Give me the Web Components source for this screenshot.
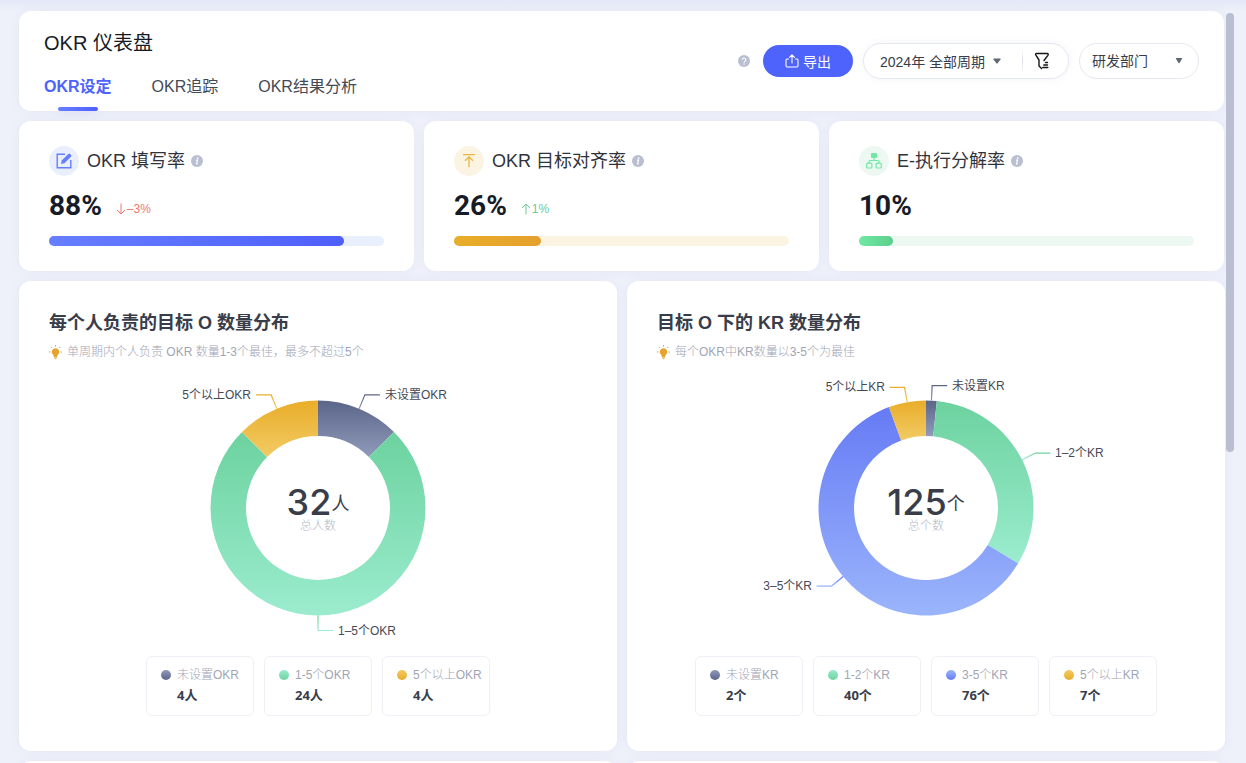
<!DOCTYPE html>
<html lang="zh-CN">
<head>
<meta charset="utf-8">
<title>OKR 仪表盘</title>
<style>
html,body{height:100%;margin:0}
body{font-family:"Liberation Sans","Noto Sans CJK SC",sans-serif;font-size:14px;color:#383d49;background:#eef1fa;overflow:hidden}
</style>
</head>
<body>
<okr-page>
  <okr-header slot="header"></okr-header>
  <kpi-card slot="kpi" label="OKR 填写率" value="88" delta="–3%" trend="down" icon="edit" style="--tint:#e9effd;--from:#667eff;--to:#4e5ffb"></kpi-card>
  <kpi-card slot="kpi" label="OKR 目标对齐率" value="26" delta="1%" trend="up" icon="align" style="--tint:#fbf4e3;--from:#e9ad29;--to:#e4a02d"></kpi-card>
  <kpi-card slot="kpi" label="E-执行分解率" value="10" icon="tree" style="--tint:#edf8f3;--from:#6fe9a4;--to:#5ccf8b"></kpi-card>
  <chart-card slot="chart" unit="人" total-label="总人数"
    data='[["未设置OKR","未设置OKR",4,"slate"],["1–5个OKR","1-5个OKR",24,"green"],["5个以上OKR","5个以上OKR",4,"amber"]]'>
    <span slot="title">每个人负责的目标 O 数量分布</span>
    <span slot="tip">单周期内个人负责 OKR 数量1-3个最佳，最多不超过5个</span>
  </chart-card>
  <chart-card slot="chart" unit="个" total-label="总个数"
    data='[["未设置KR","未设置KR",2,"slate"],["1–2个KR","1-2个KR",40,"green"],["3–5个KR","3-5个KR",76,"blue"],["5个以上KR","5个以上KR",7,"amber"]]'>
    <span slot="title">目标 O 下的 KR 数量分布</span>
    <span slot="tip">每个OKR中KR数量以3-5个为最佳</span>
  </chart-card>
  <blank-card slot="chart"></blank-card>
  <blank-card slot="chart"></blank-card>
</okr-page>

<script>
const CARD = `background:#fff;border-radius:12px;box-shadow:0 0 12px rgba(90,100,170,.06);box-sizing:border-box;`;

class Base extends HTMLElement {
  constructor(){ super(); this.attachShadow({mode:'open'}); }
  connectedCallback(){ this.shadowRoot.innerHTML = this.render(); }
}

customElements.define('okr-page', class extends Base {
  render(){ return `<style>
    :host{display:block;position:relative;height:100vh;overflow:hidden;box-sizing:border-box;padding:11px 22px 0 19px;
      background:linear-gradient(#e3e7f7 0,#eef1fa 11px)}
    main{display:flex;flex-direction:column;gap:10px}
    .row{display:grid;gap:10px}
    .kpis{grid-template-columns:repeat(3,minmax(0,1fr))}
    .charts{grid-template-columns:repeat(2,minmax(0,1fr));margin-right:-1px}
    .thumb{position:absolute;right:12px;top:13px;width:8px;height:calc(58% - 4px);border-radius:4px;background:#b9bed0}
    </style>
    <main><slot name="header"></slot>
      <div class="row kpis"><slot name="kpi"></slot></div>
      <div class="row charts"><slot name="chart"></slot></div></main>
    <div class="thumb"></div>`; }
});

customElements.define('blank-card', class extends Base {
  render(){ return `<style>:host{display:block;min-height:470px;${CARD}}</style>`; }
});

customElements.define('info-dot', class extends Base {
  render(){
    const q = this.hasAttribute('help');
    return `<style>:host{display:block;width:12px;height:12px}svg{display:block}</style>
    <svg width="12" height="12" viewBox="0 0 12 12"><circle cx="6" cy="6" r="6" fill="#b9bed0"/>${q
      ? '<path d="M4.3 4.8a1.75 1.75 0 1 1 2.6 1.5c-.6.35-.8.6-.8 1.1" fill="none" stroke="#fff" stroke-width="1.1"/><circle cx="6.1" cy="9" r=".7" fill="#fff"/>'
      : '<circle cx="6.7" cy="3.1" r=".9" fill="#fff"/><path d="M5 5.1h1.5L5.6 9h1.1" fill="none" stroke="#fff" stroke-width="1.2"/>'}</svg>`; }
});

customElements.define('okr-header', class extends Base {
  render(){ return `<style>
    :host{display:flex;justify-content:space-between;align-items:center;height:100px;padding:0 25px;${CARD}}
    .left{align-self:stretch;display:flex;flex-direction:column;justify-content:space-between;padding-top:18px;box-sizing:border-box}
    h1{margin:0;font-size:20px;line-height:28px;font-weight:400;color:#171b26}
    nav{display:flex;gap:40px}
    a{display:flex;flex-direction:column;align-items:center;gap:8px;font-size:16px;line-height:24px;color:#444955;text-decoration:none}
    a::after{content:"";width:40px;height:4px;border-radius:2px}
    a.on{color:#4e63fb;font-weight:700}
    a.on::after{background:linear-gradient(90deg,#667eff,#4e5ffb);box-shadow:0 2px 8px rgba(78,95,251,.12)}
    .tools{display:flex;align-items:center;gap:10px}
    info-dot{margin-right:3px}
    button,select{font:inherit;border:0;background:none;padding:0;color:#383d49;cursor:pointer}
    .export{display:flex;align-items:center;justify-content:center;gap:4px;width:90px;height:32px;border-radius:16px;background:#4e63fb;color:#fff}
    .pill{display:flex;align-items:center;box-sizing:border-box;height:36px;border:1px solid #e6e8f0;border-radius:18px;background:#fff}
    .period{width:206px;padding-left:16px;box-shadow:0 0 8px rgba(90,100,150,.07)}
    .cycle{display:flex;align-items:center;gap:8px;flex:1;height:34px}
    .cut{width:1px;height:26px;background:linear-gradient(transparent,#dcdee6,transparent)}
    .filter{display:grid;place-items:center;width:38px;height:34px;margin-right:7px}
    .dept{width:120px;display:grid}
    .dept select{grid-area:1/1;appearance:none;width:100%;height:34px;padding-left:12px;border-radius:17px}
    .dept svg{grid-area:1/1;justify-self:end;margin-right:15px;pointer-events:none}
    svg{display:block}
    </style>
    <div class="left"><h1>OKR 仪表盘</h1>
      <nav><a class="on" href="#set">OKR设定</a><a href="#track">OKR追踪</a><a href="#result">OKR结果分析</a></nav></div>
    <div class="tools">
      <info-dot help></info-dot>
      <button class="export"><svg width="14" height="14" viewBox="0 0 14 14" fill="none" stroke="#fff" stroke-width="1.1" stroke-linecap="round" stroke-linejoin="round"><path d="M3.5 5H2.2A1.2 1.2 0 0 0 1 6.200v5.600A1.200 1.200 0 0 0 2.200 13h9.600a1.200 1.200 0 0 0 1.200-1.200V6.200A1.200 1.200 0 0 0 11.800 5h-1.300M7 9V1M4.500 3.300 7 .9l2.500 2.400"/></svg>导出</button>
      <div class="pill period">
        <button class="cycle">2024年 全部周期<svg width="8" height="6" viewBox="0 0 8 6"><path d="M1 .5h6Q8 .5 7.500 1.400L4.600 5.300Q4 6 3.400 5.300L.5 1.400Q0 .5 1 .5Z" fill="#606874"/></svg></button>
        <span class="cut"></span>
        <button class="filter" aria-label="筛选"><svg width="16" height="18" viewBox="0 0 16 18" fill="none" stroke="#151515" stroke-width="1.400" stroke-linejoin="round" stroke-linecap="round"><path d="M10 8.500 13.700 3.600Q14.900 1.500 13.300 1.500H2.700Q.9 1.500 1.900 3.200L5 8v6L7.600 16.500M11.500 10.500h2M9.800 13h3.700M8.800 15.500h5"/></svg></button>
      </div>
      <div class="pill dept"><select aria-label="部门"><option>研发部门</option></select>
        <svg width="8" height="8" viewBox="0 0 8 8"><path d="M1.300 1h5.400q.8 0 .4.800L4.500 6Q4 6.600 3.500 6L.9 1.800Q.5 1 1.300 1Z" fill="#606874"/></svg></div>
    </div>`; }
});

const ICONS = {
  edit:'<path d="M9 1.200H1.200v13.600h13.600V7" fill="none" stroke="#667eff" stroke-width="1.400"/><path d="M5 11l.7-3.400L12.300 1Q13.200.2 14.100 1l.9.900q.8.900 0 1.800L8.400 10.300Z" fill="#667eff"/>',
  align:'<path d="M2 1.600h12M8 14.200V4M4 7.800l4-4 4 4" fill="none" stroke="#ebb540" stroke-width="1.300"/>',
  tree:'<rect x="5" y="0" width="6" height="5" rx="1" fill="#6fe9a4"/><path d="M8 5v2.500M3 10V8.500q0-1 1-1h8q1 0 1 1V10" fill="none" stroke="#6fe9a4" stroke-width="1.200"/><rect x=".7" y="10.200" width="5.200" height="4.800" rx="1" fill="none" stroke="#6fe9a4" stroke-width="1.200"/><rect x="10.100" y="10.200" width="5.200" height="4.800" rx="1" fill="none" stroke="#6fe9a4" stroke-width="1.200"/>'
};

customElements.define('kpi-card', class extends Base {
  render(){
    const a = n => this.getAttribute(n), up = a('trend') === 'up';
    const arrow = up ? 'M5 11.500V1M1 5l4-4 4 4' : 'M5 .5V11M1 7l4 4 4-4';
    return `<style>
    :host{display:block;height:150px;padding:25px 30px;${CARD}}
    .head{display:flex;align-items:center;gap:8px;height:30px}
    .icon{display:grid;place-items:center;width:30px;height:30px;border-radius:50%;background:var(--tint)}
    h2{margin:0;font-size:18px;line-height:26px;font-weight:400;color:#2f333c}
    info-dot{margin-left:-2px}
    .num{display:flex;align-items:baseline;gap:14px;margin-top:12px;height:36px;line-height:36px}
    b{font-family:Roboto,"Liberation Sans",sans-serif;font-size:28px;color:#171b26}
    .delta{display:flex;align-items:center;gap:1px;font-size:12px;line-height:16px;color:${up?'#6cc998':'#f0776f'}}
    .bar{margin-top:12px;height:10px;border-radius:5px;background:var(--tint)}
    .fill{height:10px;border-radius:5px;width:${a('value')}%;background:linear-gradient(90deg,var(--from),var(--to))}
    svg{display:block}
    </style>
    <div class="head"><span class="icon"><svg width="16" height="16" viewBox="0 0 16 16">${ICONS[a('icon')]}</svg></span>
      <h2>${a('label')}</h2><info-dot></info-dot></div>
    <div class="num"><b>${a('value')}%</b>${a('delta') ? `<span class="delta"><svg width="10" height="12" viewBox="0 0 10 12" fill="none" stroke="currentColor"><path d="${arrow}"/></svg>${a('delta')}</span>` : ''}</div>
    <div class="bar"><div class="fill"></div></div>`; }
});

const TONES = {slate:['#5b6588','#909bbb'],green:['#6cd29f','#9becce'],blue:['#667bf5','#9bb5fb'],amber:['#e9ad29','#f2cb65']};

customElements.define('donut-chart', class extends Base {
  render(){
    const rows = JSON.parse(this.getAttribute('data')), sum = rows.reduce((s,r)=>s+r[2],0);
    const R = 107.5, r = 72, at = (t,d) => [Math.sin(t)*d, -Math.cos(t)*d].map(v=>v.toFixed(2)).join(' ');
    let t = 0, out = '';
    for (const [label,,n,tone] of rows) {
      const e = t + n/sum*2*Math.PI, m = (t+e)/2, big = e-t > Math.PI ? 1 : 0;
      out += `<path fill="url(#${tone})" d="M${at(t,R)}A${R} ${R} 0 ${big} 1 ${at(e,R)}L${at(e,r)}A${r} ${r} 0 ${big} 0 ${at(t,r)}Z"/>`;
      const dir = m <= Math.PI + .001 ? 1 : -1, x = Math.sin(m)*(R+15), y = -Math.cos(m)*(R+15);
      out += `<path fill="none" stroke="url(#${tone})" stroke-width="1.2" d="M${at(m,R)}L${at(m,R+15)}h${15*dir}"/>
        <text x="${Math.round(x+20*dir)}" y="${Math.round(y+4)}" text-anchor="${dir>0?'start':'end'}">${label}</text>`;
      t = e;
    }
    return `<style>
    :host{display:grid;place-items:center}
    svg{grid-area:1/1;display:block;overflow:visible}
    text{font-size:12px;fill:#464a56}
    .mid{grid-area:1/1;display:flex;flex-direction:column;align-items:center;color:#383d49}
    .total{display:flex;align-items:center;height:36px;font:500 36px/36px Inter,"Liberation Sans",sans-serif}
    .total small{font:400 18px/36px "Noto Sans CJK SC",sans-serif}
    .cap{font-size:12px;line-height:12px;font-weight:300;color:#b4b8c5}
    </style>
    <svg width="360" height="270" viewBox="-180 -135 360 270"><defs>${Object.entries(TONES).map(([k,c])=>
      `<linearGradient id="${k}" x1="0" y1="0" x2="0" y2="1"><stop stop-color="${c[0]}"/><stop offset="1" stop-color="${c[1]}"/></linearGradient>`).join('')}</defs>${out}</svg>
    <div class="mid"><div class="total">${sum}<small>${this.getAttribute('unit')}</small></div><div class="cap">${this.getAttribute('total-label')}</div></div>`; }
});

customElements.define('legend-item', class extends Base {
  render(){
    const c = TONES[this.getAttribute('tone')];
    return `<style>
    :host{display:grid;grid-template-columns:10px auto;column-gap:6px;justify-content:start;align-content:center;align-items:center;box-sizing:border-box;width:108px;height:60px;padding:0 0 2px 14px;border:1px solid #eff0f5;border-radius:6px}
    i{width:10px;height:10px;border-radius:50%;background:linear-gradient(${c[1]},${c[0]})}
    .name{font-size:12px;line-height:20px;font-weight:300;color:#9fa5b6;white-space:nowrap}
    b{grid-column:2;font:700 13px/20px "Noto Sans","Noto Sans CJK SC",sans-serif;color:#383d49}
    </style><i></i><span class="name"><slot name="name"></slot></span><b><slot></slot></b>`; }
});

customElements.define('chart-card', class extends Base {
  render(){
    const unit = this.getAttribute('unit'), data = this.getAttribute('data');
    const items = JSON.parse(data).map(r=>`<legend-item tone="${r[3]}"><span slot="name">${r[1]}</span>${r[2]}${unit}</legend-item>`).join('');
    return `<style>
    :host{display:flex;flex-direction:column;min-height:470px;padding:28px 30px 35px;${CARD}}
    h2{margin:0;font-size:18px;line-height:28px;font-weight:700;color:#383d49}
    p{display:flex;align-items:center;gap:5px;margin:5px 0 0;font-size:12px;line-height:20px;font-weight:300;color:#9fa5b6}
    donut-chart{margin-top:11px}
    .legend{display:flex;justify-content:center;gap:10px;margin-top:auto}
    </style>
    <h2><slot name="title"></slot></h2>
    <p><svg width="13" height="15" viewBox="0 0 13 15"><path d="M6.500 3.200a3.700 3.700 0 0 1 2.400 6.500q-.6.600-.7 1.600v1.200H4.800v-1.200q-.1-1-.7-1.600A3.700 3.700 0 0 1 6.500 3.200Z" fill="#e6a42c"/><path d="M5.500 13.700h2M6.500 0v1.500M1.800 2l1 1M11.200 2l-1 1M0 7h1.500M11.500 7H13" stroke="#e6a42c" stroke-width="1"/></svg><span><slot name="tip"></slot></span></p>
    <donut-chart data='${data}' unit="${unit}" total-label="${this.getAttribute('total-label')}"></donut-chart>
    <div class="legend">${items}</div>`; }
});
</script>
</body>
</html>
